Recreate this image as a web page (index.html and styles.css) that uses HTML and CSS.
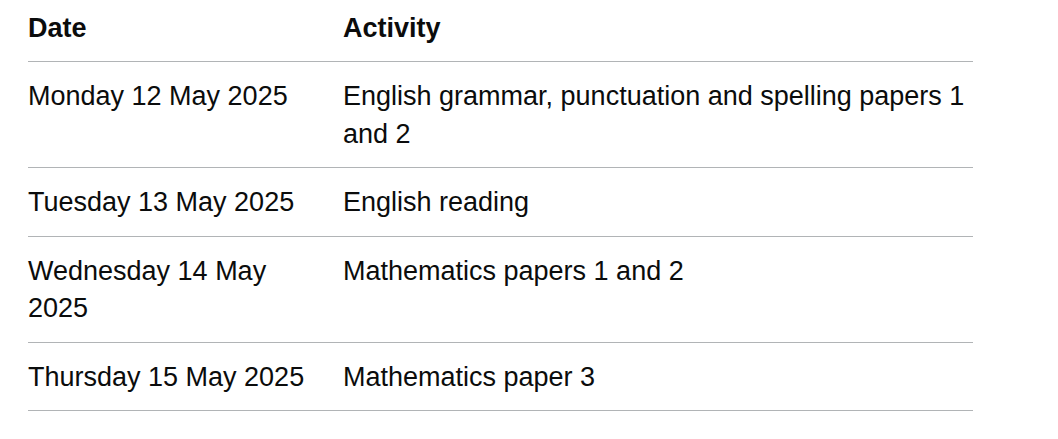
FILE: index.html
```html
<!DOCTYPE html>
<html lang="en">
<head>
<meta charset="utf-8">
<title>Key stage 2 test timetable</title>
<link rel="stylesheet" href="styles.css">
</head>
<body>
<main class="page">
  <table class="table">
    <thead>
      <tr class="row">
        <th class="cell head col-date" scope="col">Date</th>
        <th class="cell head" scope="col">Activity</th>
      </tr>
    </thead>
    <tbody>
      <tr class="row">
        <td class="cell">Monday 12 May 2025</td>
        <td class="cell">English grammar, punctuation and spelling papers 1 and 2</td>
      </tr>
      <tr class="row">
        <td class="cell">Tuesday 13 May 2025</td>
        <td class="cell">English reading</td>
      </tr>
      <tr class="row">
        <td class="cell">Wednesday 14 May 2025</td>
        <td class="cell">Mathematics papers 1 and 2</td>
      </tr>
      <tr class="row">
        <td class="cell">Thursday 15 May 2025</td>
        <td class="cell">Mathematics paper 3</td>
      </tr>
    </tbody>
  </table>
</main>
</body>
</html>
```

FILE: styles.css
```css
html, body {
  margin: 0;
  padding: 0;
  background: #ffffff;
}

.page {
  padding: 0 85px 0 28px;
  font-family: "Liberation Sans", Arial, sans-serif;
  color: #0b0c0c;
}

.table {
  width: 945px;
  margin-top: -6.5px;
  border-collapse: collapse;
  border-spacing: 0;
  table-layout: fixed;
  font-size: 27px;
  line-height: 37.5px;
}

.cell {
  padding: 16px 30px 14px 0;
  border-bottom: 1px solid #b1b4b6;
  text-align: left;
  vertical-align: top;
  font-weight: 400;
}

.cell:last-child {
  padding-right: 0;
}

.head {
  font-weight: 700;
}

.col-date {
  width: 285px;
}
```
